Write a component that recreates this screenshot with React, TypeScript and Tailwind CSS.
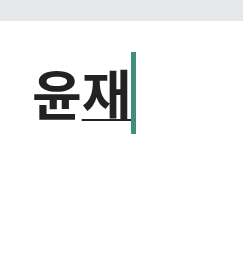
export default function App() {
  return (
    <div className="w-[243px] h-[273px] bg-white" style={{ fontFamily: '"Noto Sans CJK KR", "Noto Sans", sans-serif' }}>
      <div className="h-[21px] bg-[#e5e7eb]" />
      <div className="pl-[32px] pt-[31px] flex items-start">
        <span className="text-[54px] font-bold leading-[82px] text-[#222222] whitespace-nowrap">
          윤<span className="underline decoration-[1.5px] underline-offset-[3px]">재</span>
        </span>
        <div className="w-[5px] h-[82px] bg-[#3e8f7e]" />
      </div>
    </div>
  );
}
